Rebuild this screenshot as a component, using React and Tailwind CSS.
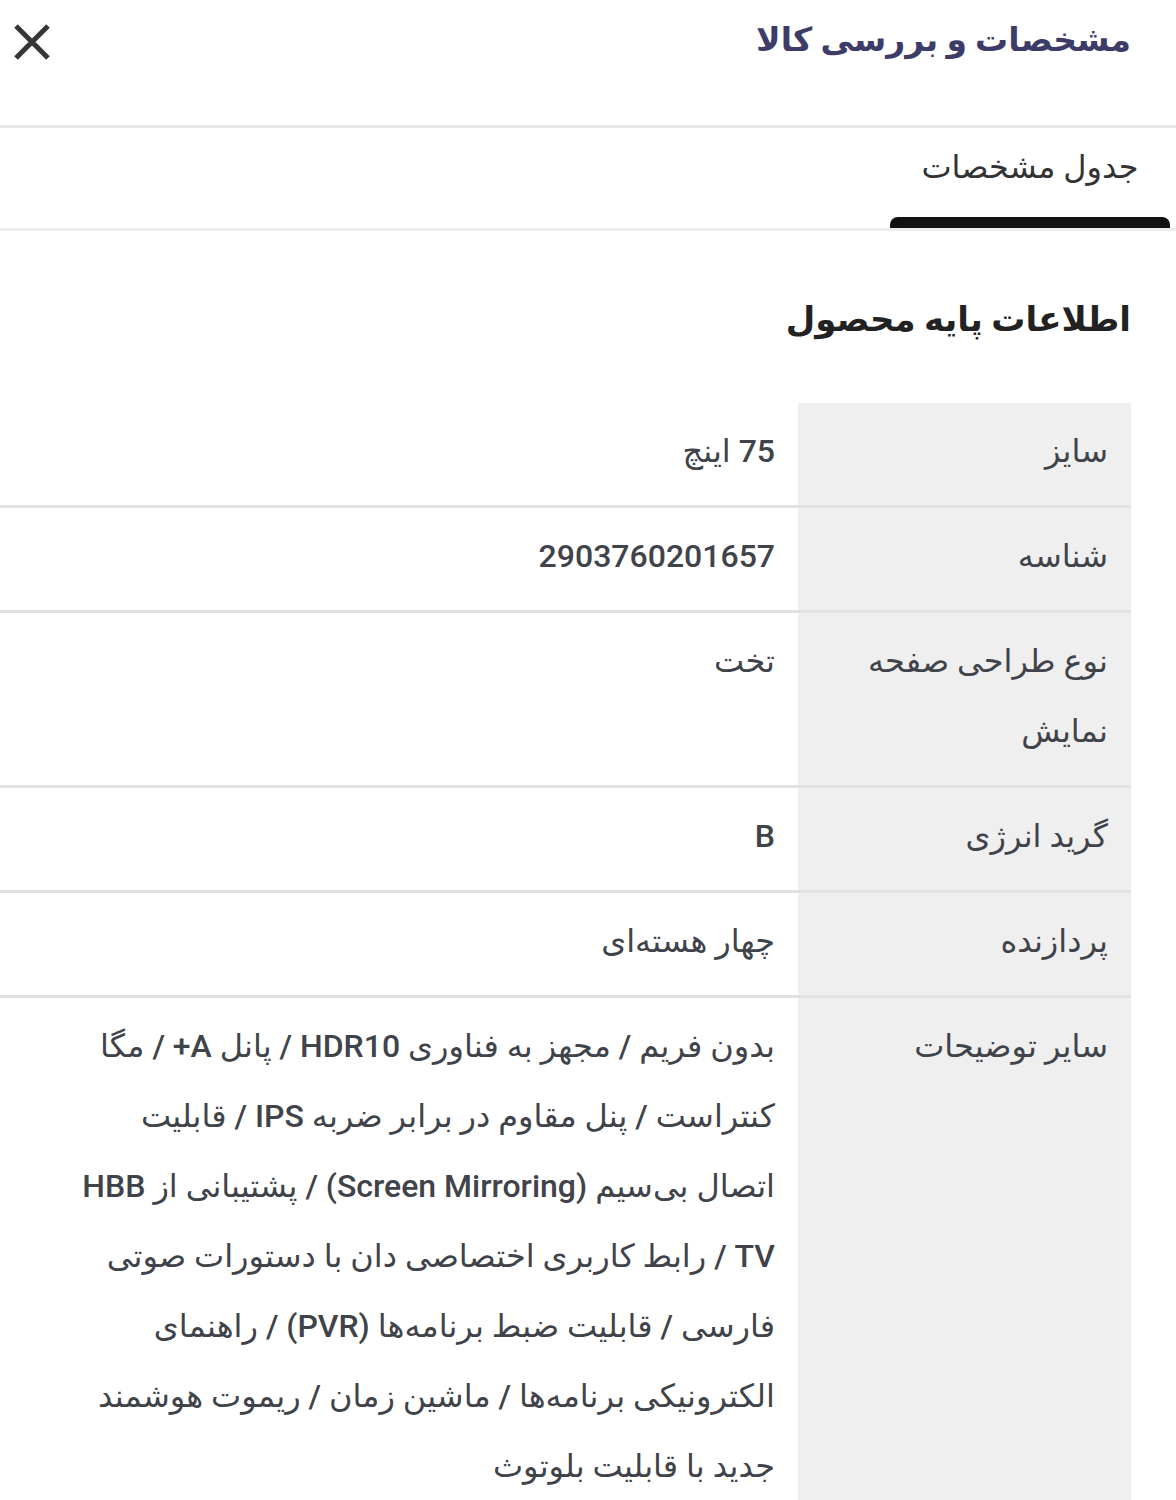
import React from 'react';

const rows = [
  { label: 'سایز', value: ['75 اینچ'] },
  { label: 'شناسه', value: ['2903760201657'] },
  { label: 'نوع طراحی صفحه نمایش', value: ['تخت'] },
  { label: 'گرید انرژی', value: ['B'] },
  { label: 'پردازنده', value: ['چهار هسته‌ای'] },
  {
    label: 'سایر توضیحات',
    value: [
      'بدون فریم / مجهز به فناوری HDR10 / پانل A+ / مگا',
      'کنتراست / پنل مقاوم در برابر ضربه IPS / قابلیت',
      'اتصال بی‌سیم (Screen Mirroring) / پشتیبانی از HBB',
      'TV / رابط کاربری اختصاصی دان با دستورات صوتی',
      'فارسی / قابلیت ضبط برنامه‌ها (PVR) / راهنمای',
      'الکترونیکی برنامه‌ها / ماشین زمان / ریموت هوشمند',
      'جدید با قابلیت بلوتوث',
    ],
  },
];

export default function App() {
  return (
    <div
      dir="rtl"
      className="w-[1176px] min-h-[1500px] bg-white text-[#404349]"
      style={{ fontFamily: 'Roboto, "DejaVu Sans", sans-serif' }}
    >
      {/* Header */}
      <div className="h-[128px] flex items-start justify-between pr-[45px] pl-[12px] pt-[14px] border-b-[3px] border-[#e8e8e8]">
        <h1 className="text-[33px] font-bold text-[#3d3c69] leading-[52px]">
          <span className="leading-[1.2]">مشخصات و بررسی کالا</span>
        </h1>
        <button className="w-[40px] h-[40px] mt-[8px] flex items-center justify-center">
          <svg width="40" height="40" viewBox="0 0 40 40" fill="none" stroke="#353535" strokeWidth="5">
            <path d="M4 4 L36 36 M36 4 L4 36" />
          </svg>
        </button>
      </div>

      {/* Tabs */}
      <div className="h-[103px] flex items-end pr-[6px] border-b-[3px] border-[#ececec]">
        <div className="w-[280px] h-full flex flex-col items-center justify-between">
          <span className="mt-[20px] text-[32px] font-medium text-[#333] leading-[1.2]">جدول مشخصات</span>
          <div className="w-full h-[11px] bg-[#111] rounded-t-[8px]" />
        </div>
      </div>

      {/* Section */}
      <div className="pr-[45px]">
        <h2 className="mt-[63px] h-[50px] text-[34px] font-bold text-[#222] leading-[50px]">
          <span className="leading-[1.2]">اطلاعات پایه محصول</span>
        </h2>

        <div className="mt-[59px]">
          {rows.map((row, i) => (
            <div
              key={row.label}
              className={`flex ${i < rows.length - 1 ? 'border-b-[3px] border-[#e2e2e2]' : ''}`}
            >
              <div className="w-[333px] shrink-0 bg-[#efefef] px-[23px] pt-[13px] pb-[19px] text-[32px] leading-[70px] text-[#404349]">
                <span className="leading-[1.2]">{row.label}</span>
              </div>
              <div className="flex-1 px-[23px] pt-[13px] pb-[19px] text-[32px] leading-[70px] font-medium text-[#404349]">
                {row.value.map((line) => (
                  <div key={line} className="whitespace-nowrap">
                    <span className="leading-[1.2]">{line}</span>
                  </div>
                ))}
              </div>
            </div>
          ))}
        </div>
      </div>
    </div>
  );
}
